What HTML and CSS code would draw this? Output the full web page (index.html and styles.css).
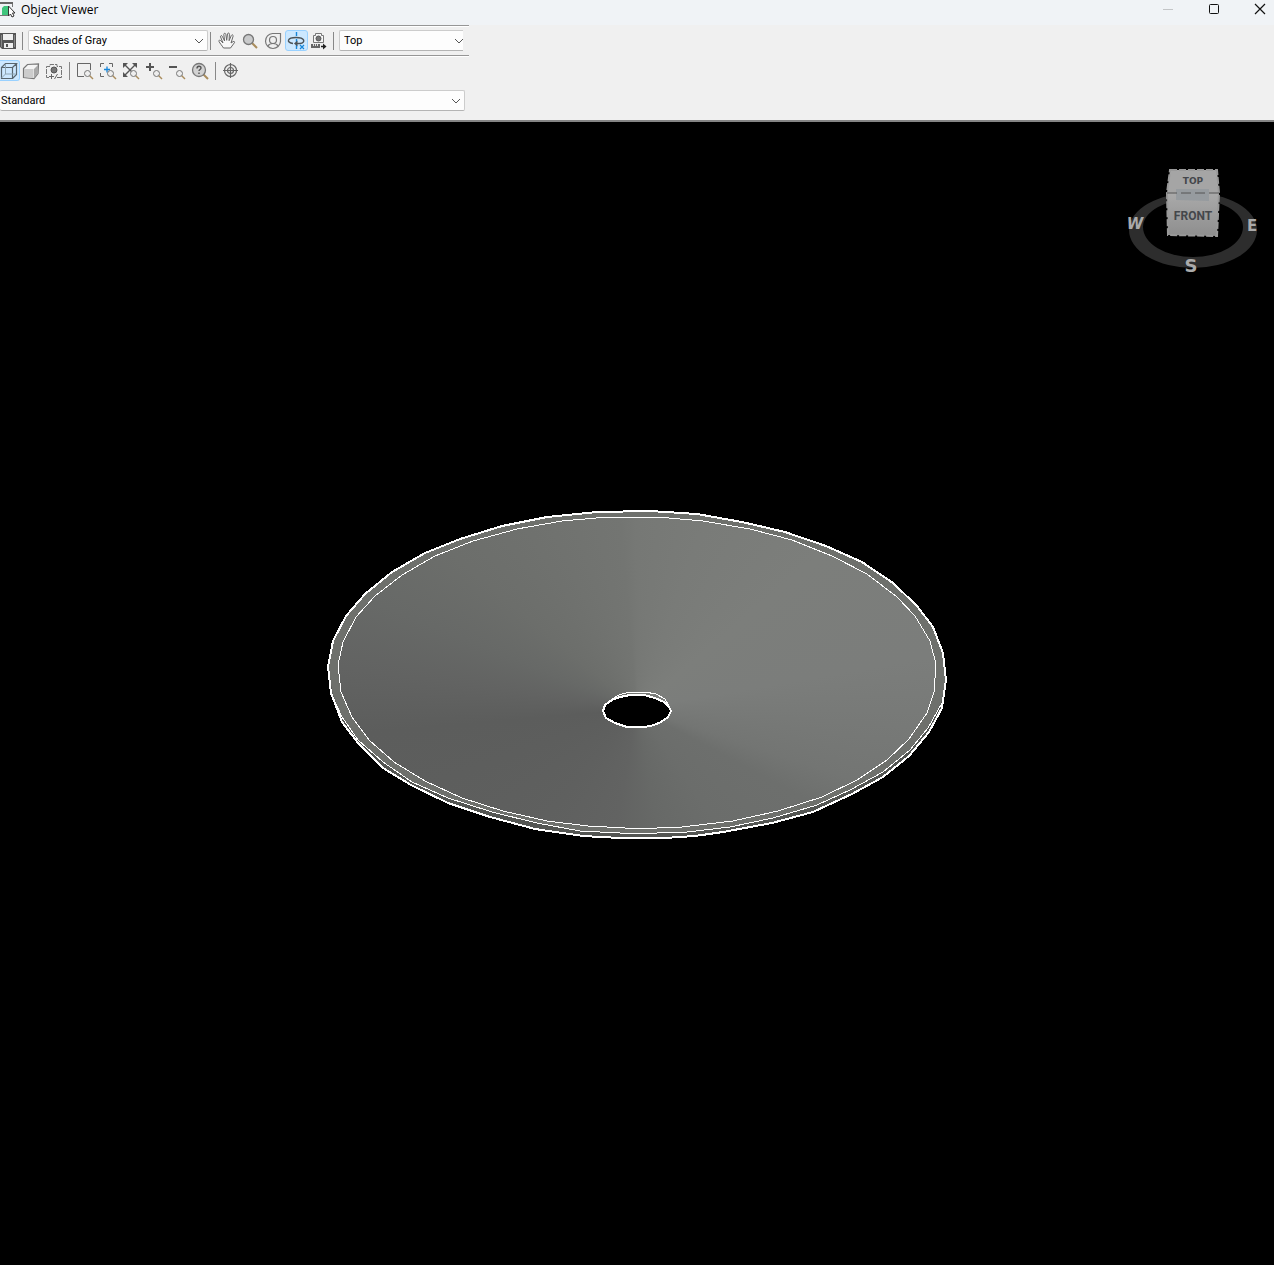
FILE: index.html
```html
<!DOCTYPE html>
<html lang="en">
<head>
<meta charset="utf-8">
<title>Object Viewer</title>
<link rel="stylesheet" href="styles.css">
</head>
<body>
<div class="window">
  <header class="titlebar">
    <svg class="app-icon" width="16" height="20" viewBox="0 0 16 20" aria-hidden="true">
      <path d="M0 2.500H12.500V7M0 15.500H8" fill="none" stroke="#777" />
      <path d="M0 2h13v2H0z" fill="#666" />
      <path d="M2 8l2-2h4v9H2z" fill="#3fc57d" />
      <path d="M8.500 6v10l2-2 1.500 3 2-1-1.500-3h2.500z" fill="#fff" stroke="#333" />
    </svg>
    <h1 class="title">Object Viewer</h1>
    <div class="window-buttons">
      <button class="win-btn" aria-label="Minimize"><svg width="12" height="12" viewBox="0 0 12 12"><path d="M1 6.500h10" stroke="#c3c5c7" /></svg></button>
      <button class="win-btn" aria-label="Maximize"><svg width="12" height="12" viewBox="0 0 12 12"><rect x="1.500" y="1.500" width="9" height="9" rx="1" fill="none" stroke="#111" /></svg></button>
      <button class="win-btn" aria-label="Close"><svg width="12" height="12" viewBox="0 0 12 12"><path d="M1 1l10 10M11 1L1 11" stroke="#111" stroke-width="1.200" /></svg></button>
    </div>
  </header>

  <div class="toolbars">
    <div class="toolbar ruled" role="toolbar" aria-label="Display and navigation">
      <button class="tool first-save" aria-label="Save">
        <svg width="16" height="20" viewBox="0 0 16 20"><path d="M0 2h16v16H2l-2-2z" fill="#555" /><path d="M3 3h10v6H3z" fill="#efefef" /><path d="M1.500 4v12M14.500 4v12" stroke="#888" /><path d="M4 12h9v5H4z" fill="#efefef" /><path d="M6 13h2v3H6z" fill="#555" /></svg>
      </button>
      <span class="separator"></span>
      <div class="combo style-combo">
        <select aria-label="Visual style"><option>Shades of Gray</option></select>
        <svg class="chevron" width="10" height="6" viewBox="0 0 10 6"><path d="M1 1l4 4 4-4" /></svg>
      </div>
      <span class="separator"></span>
      <div class="tools">
        <button class="tool" aria-label="Pan"><svg class="icon" viewBox="0 0 20 20"><path d="M6.500 17C5 14.500 3 12.500 2 10.500c-.6-1.200.8-1.800 1.600-1L6 12 3.600 6c-.5-1.400 1.100-2 1.700-.7L7.600 10 6.800 3.500c-.1-1.500 1.700-1.600 2-.2L9.700 9.300l.8-6.400c.3-1.300 2-1.100 1.900.3l-.3 6.500 2.200-5.200c.6-1.300 2.200-.6 1.800.7L14 12l2-1.300c1.300-.8 2.200.4 1.200 1.300L13.500 17z" fill="#f8f8f8" stroke="#666" /></svg></button>
        <button class="tool" aria-label="Zoom"><svg class="icon" viewBox="0 0 20 20"><path d="M12 12l5 5" stroke="#a98c5c" stroke-width="2" /><circle cx="8.500" cy="8.500" r="5" fill="#c9cacb" stroke="#777" stroke-width="1.300" /></svg></button>
        <button class="tool" aria-label="Orbit"><svg class="icon" viewBox="0 0 20 20"><g fill="none" stroke="#777" stroke-width="1.200"><path d="M9.500 2.500h8v8a7.500 7.500 0 1 1-8-8z" /><circle cx="10" cy="9" r="3.500" /><path d="M5 15c1-2 3-2.500 5-2.500s4 .5 5 2.500" /></g></svg></button>
        <button class="tool active" aria-pressed="true" aria-label="Constrained orbit"><svg class="icon" viewBox="0 0 20 20"><path d="M10.500 1v4M10.500 8v3M10.500 14v4" stroke="#1686d9" stroke-width="1.400" /><path d="M7 12.500C0 11.500 1 6.500 10 6.500s10 5 4 6h-3" fill="none" stroke="#4c5357" stroke-width="1.400" /><path d="M11.500 9.500v6L8 12.500z" fill="#4c5357" /><path d="M14 14l4 4M18 14l-4 4" stroke="#1686d9" stroke-width="1.200" /></svg></button>
        <button class="tool" aria-label="Camera distance"><svg class="icon" viewBox="0 0 20 20"><path d="M4.500 4.500h2v-2h6v2h2v7h-10z" fill="#f7f7f7" stroke="#777" /><circle cx="9.500" cy="7.500" r="2.500" fill="#777" stroke="#555" /><path d="M2 13h9v4H2z" fill="#666" /><path d="M4.500 13v2M6.500 13v2M8.500 13v2" stroke="#ddd" /><path d="M12 15.500h3" stroke="#222" stroke-width="1.500" /><path d="M14 12.500l3.500 3-3.500 3z" fill="#222" /></svg></button>
      </div>
      <span class="separator view-separator"></span>
      <div class="combo view-combo">
        <select aria-label="View"><option>Top</option></select>
        <svg class="chevron" width="10" height="6" viewBox="0 0 10 6"><path d="M1 1l4 4 4-4" /></svg>
      </div>
    </div>

    <div class="toolbar ruled" role="toolbar" aria-label="Projection and zoom">
      <div class="tools">
        <button class="tool active edge" aria-pressed="true" aria-label="Parallel"><svg class="icon" viewBox="0 0 20 20"><path d="M1.500 6.500h11v11h-11zM1.500 6.500l4-4h11l-4 4M16.500 2.500v11l-4 4" fill="none" stroke="#59666e" stroke-width="1.200" /><path d="M5.500 3v10h10M5.500 13l-4 4" fill="none" stroke="#8ea5b2" /></svg></button>
        <button class="tool" aria-label="Perspective"><svg class="icon" viewBox="0 0 20 20"><path d="M2.500 7.500l4-4 11-.5-.5 9.500-4 5-10.500-1z" fill="#f4f4f4" stroke="#777" stroke-width="1.200" /><path d="M3 8h9.500v9L3 16z" fill="#ccc" /><path d="M13 8l4-4v8.500l-4 4.500z" fill="#a9a9a9" /></svg></button>
        <button class="tool" aria-label="Camera"><svg class="icon" viewBox="0 0 20 20"><path d="M5 16.500H2.500v-11H6v-2h7v2h4.500v11H15" fill="none" stroke="#777" stroke-dasharray="5 1" /><circle cx="10" cy="9" r="3" fill="#777" stroke="#555" /><path d="M5 15.500h5M7.500 13v5M10.500 18l3-5M13 16.500h4" stroke="#666" /></svg></button>
      </div>
      <span class="separator tight"></span>
      <div class="tools">
        <button class="tool" aria-label="Zoom window"><svg class="icon" viewBox="0 0 20 20"><path d="M9 15.500H2.500v-13h13V9" fill="none" stroke="#666" /><use href="#lens" /></svg></button>
        <button class="tool" aria-label="Zoom center"><svg class="icon" viewBox="0 0 20 20"><path d="M2.500 6V2.500H6M11 2.500h3.500V6M2.500 12v3.500H6" fill="none" stroke="#666" /><path d="M6 8.500h6M9 5.500v6" stroke="#1686d9" stroke-width="1.300" /><use href="#lens" /></svg></button>
        <button class="tool" aria-label="Zoom extents"><svg class="icon" viewBox="0 0 20 20"><path d="M4 4l8 8M14 4L4 14" stroke="#555" stroke-width="1.400" /><path d="M2 2h5L2 7zM16 2h-5l5 5zM2 16h5l-5-5z" fill="#555" /><use href="#lens" /></svg></button>
        <button class="tool" aria-label="Zoom in"><svg class="icon" viewBox="0 0 20 20"><path d="M2 6h8M6 2v8" stroke="#555" stroke-width="2" /><use href="#lens" /></svg></button>
        <button class="tool" aria-label="Zoom out"><svg class="icon" viewBox="0 0 20 20"><path d="M2 6h8" stroke="#555" stroke-width="2" /><use href="#lens" /></svg></button>
        <button class="tool" aria-label="Zoom help"><svg class="icon" viewBox="0 0 20 20"><path d="M13 13l5 5" stroke="#a98c5c" stroke-width="2" /><circle cx="9" cy="9" r="6.500" fill="#d2d2d2" stroke="#777" stroke-width="1.300" /><path d="M7 7.500c0-3 4-3 4-.5 0 1.500-2 1.500-2 3M9 11.500v1.500" fill="none" stroke="#555" stroke-width="1.400" /></svg></button>
      </div>
      <span class="separator tight"></span>
      <div class="tools">
        <button class="tool" aria-label="Target"><svg class="icon" viewBox="0 0 20 20"><g fill="none" stroke="#666" stroke-width="1.200"><circle cx="9.500" cy="9.500" r="6" /><circle cx="9.500" cy="9.500" r="3" /><path d="M9.500 2v15M2 9.500h15" /></g></svg></button>
      </div>
    </div>

    <div class="toolbar" role="toolbar" aria-label="Configuration">
      <div class="combo standard-combo">
        <select aria-label="Configuration"><option>Standard</option></select>
        <svg class="chevron" width="10" height="6" viewBox="0 0 10 6"><path d="M1 1l4 4 4-4" /></svg>
      </div>
    </div>
  </div>

  <main class="viewport">
    <svg class="model" width="640" height="385" viewBox="317 501 640 385" role="img" aria-label="Disc with a central hole">
      <defs>
        <path id="outer" d="M650 511 597 512 547 517 502 526 460 539 425 553 392 572 365 594 346 616 333 641 328 667 331 693 342 722 358 743 383 768 411 785 448 803 490 817 535 829 583 836 620 838 665 838 695 836 723 832 772 823 813 812 852 794 883 777 909 756 929 732 942 708 946 680 943 653 933 627 917 606 893 583 862 562 826 546 785 532 742 522 697 514z" />
        <path id="inner" d="M608 517 562 521 517 529 473 541 435 556 402 575 375 596 356 617 343 642 338 665 341 692 352 717 369 740 394 762 425 781 462 798 503 811 547 821 588 826 625 828 657 828 682 827 733 821 778 811 822 797 857 780 887 760 909 739 927 713 934 692 936 664 930 641 915 616 897 597 867 574 832 556 792 540 750 529 703 521 657 517z" />
        <clipPath id="face"><use href="#inner" /></clipPath>
        <g id="lens"><path d="M14 14l4 4" stroke="#a98c5c" stroke-width="1.500" /><circle cx="12.500" cy="12.500" r="3" fill="#eee" stroke="#777" /></g>
      </defs>
      <use class="side" href="#outer" />
      <path class="rim" d="M650 511 597 512 547 517 502 526 460 539 425 553 392 572 365 594 346 616 333 641 328 667 333 695 342 717 358 740 383 762 412 782 448 798 492 812 537 823 580 831 620 833 657 833 687 832 730 827 773 818 817 805 850 790 883 772 910 750 928 728 941 703 946 680 943 653 933 627 917 606 893 583 862 562 826 546 785 532 742 522 697 514z" />
      <foreignObject x="317" y="501" width="640" height="385" clip-path="url(#face)"><div class="shading"></div></foreignObject>
      <g class="edges">
        <use href="#inner" />
        <path d="M331 693 342 717 358 740 383 762 412 782 448 798 492 812 537 823 580 831 620 833 657 833 687 832 730 827 773 818 817 805 850 790 883 772 910 750 928 728 942 703" />
        <path d="M603 708 609 701 619 695 629 692 645 692 656 694 665 699 670 708" />
        <use class="heavy" href="#outer" />
        <path class="heavy hole" d="M603 711 605 705 612 700 620 697 630 695 644 695 655 698 664 702 669 707 671 711 668 717 661 722 654 725 645 727 627 727 615 723 606 718z" />
      </g>
    </svg>

    <svg class="viewcube" width="160" height="130" viewBox="0 0 160 130" role="img" aria-label="View cube">
      <defs>
        <linearGradient id="front" x2="0" y2="1"><stop stop-color="#aaa" /><stop offset="1" stop-color="#8e8e8e" /></linearGradient>
      </defs>
      <path d="M15 75a64 37 0 0 1 128 0a64 38 0 0 1-128 0zM29 72a50 30 0 0 0 100 0a50 28 0 0 0-100 0z" fill="#2d2d2d" fill-rule="evenodd" />
      <path d="M56 15h47l2 23H53z" fill="#a5a5a5" />
      <path d="M53 38h52l-2 43-49-1z" fill="url(#front)" />
      <path d="M56 15h47l2 23-2 43-49-1-1-42z" fill="none" stroke="#999" stroke-width="2" stroke-dasharray="7 2" />
      <path d="M62 34h33v12l-33-1z" fill="#969b9f" />
      <path d="M53 38h52" stroke="#555" stroke-dasharray="10 4" />
      <g class="cube-text" text-anchor="middle">
        <text class="top-label" x="79" y="29">TOP</text>
        <text class="front-label" x="79" y="65">FRONT</text>
        <text class="compass slanted" x="21" y="74">W</text>
        <text class="compass" x="138" y="76">E</text>
        <text class="compass south" x="77" y="117">S</text>
      </g>
    </svg>
  </main>
</div>
</body>
</html>
```
FILE: styles.css
```css
* { box-sizing: border-box; }

body {
  margin: 0;
  background: #000;
  color: #000;
  font-family: Roboto, "Liberation Sans", sans-serif;
  font-size: 11px;
}

.window {
  display: flex;
  flex-direction: column;
  min-height: 100vh;
}

svg { display: block; }

button {
  display: flex;
  align-items: center;
  justify-content: center;
  margin: 0;
  padding: 0;
  border: 0;
  background: none;
}

.titlebar {
  display: flex;
  align-items: center;
  height: 25px;
  padding-bottom: 5px;
  background: #f0f3f6;
}

.title {
  margin: 0 0 0 5px;
  font: 12px/20px "Open Sans", sans-serif;
}

.window-buttons {
  display: flex;
  margin-left: auto;
}

.win-btn {
  width: 46px;
  height: 20px;
}

.win-btn:last-child { width: 28px; margin-left: 9px; }

.win-btn svg { margin-top: -2px; }

.toolbars {
  height: 97px;
  background: #f0f0f0;
  border-bottom: 2px solid #858585;
}

.toolbar {
  display: flex;
  align-items: center;
  width: 469px;
  height: 30px;
  border-top: 1px solid transparent;
}

.ruled {
  border-top-color: #969696;
  box-shadow: inset 0 1px #fff;
}

.tools { display: flex; }

.tool {
  justify-content: flex-start;
  width: 23px;
  height: 21px;
  padding-left: 1px;
  border-radius: 3px;
}

.tool.active {
  padding-left: 0;
  background: #cce8ff;
  border: 1px solid #99d1ff;
}

.tool.edge {
  width: 20px;
  border-left: 0;
  border-radius: 0 3px 3px 0;
}

.tool.first-save {
  width: 16px;
  padding-left: 0;
}

.icon {
  flex: none;
  width: 20px;
  height: 20px;
}

.separator {
  width: 1px;
  height: 18px;
  margin: 0 5px 0 6px;
  background: #888;
}

.style-combo + .separator,
.view-separator { margin-left: 2px; }

.separator.tight { margin: 0 4px 0 3px; }

.combo {
  display: grid;
  align-items: center;
  height: 21px;
}

.combo > * { grid-area: 1 / 1; }

.combo select {
  appearance: none;
  width: 100%;
  height: 21px;
  margin: 0;
  padding: 0 4px;
  border: 1px solid #ccc;
  border-bottom-color: #b4b4b4;
  border-radius: 2px;
  background: #fdfdfd;
  color: #000;
  font: inherit;
}

.chevron {
  justify-self: end;
  margin-right: 4px;
  fill: none;
  stroke: #555;
  pointer-events: none;
}

.style-combo { width: 180px; }
.view-combo { width: 124px; overflow: hidden; }
.view-combo select { border-right: 0; border-radius: 2px 0 0 2px; }
.view-combo .chevron { margin-right: -1px; }
.standard-combo { width: 465px; }
.standard-combo select { padding: 0 1px; border-left: 0; }

.viewport {
  position: relative;
  display: flex;
  flex: 1;
  align-items: center;
  justify-content: center;
  background: #000;
}

.side { fill: #535552; }
.rim { fill: #6e706c; }

.shading {
  width: 640px;
  height: 385px;
  background: conic-gradient(from 0deg at 320px 208px,
    #767875 0deg, #797b78 20deg, #7c7e7b 50deg, #7b7d7b 80deg,
    #767876 97deg, #737573 108deg, #6d6f6d 118deg, #6b6d6b 145deg,
    #676967 170deg, #626362 190deg, #5f605f 220deg, #5c5d5c 265deg,
    #626362 278deg, #676967 292deg, #6c6e6b 310deg, #70726f 335deg,
    #737572 355deg, #767875 360deg);
}

.edges {
  fill: none;
  stroke: #fff;
  stroke-width: 1px;
  shape-rendering: crispEdges;
}

.heavy { stroke-width: 2px; }
.hole { fill: #000; }

.viewcube {
  position: absolute;
  top: 33px;
  right: 0;
}

.cube-text { fill: #44474b; }

.top-label { font: 700 9px "DejaVu Sans", sans-serif; }
.front-label { font: 700 12px Roboto, sans-serif; }
.compass { font: 700 15px "DejaVu Sans", sans-serif; fill: #aaa; }
.slanted { font-style: italic; }
.south { font-size: 18px; }
```
